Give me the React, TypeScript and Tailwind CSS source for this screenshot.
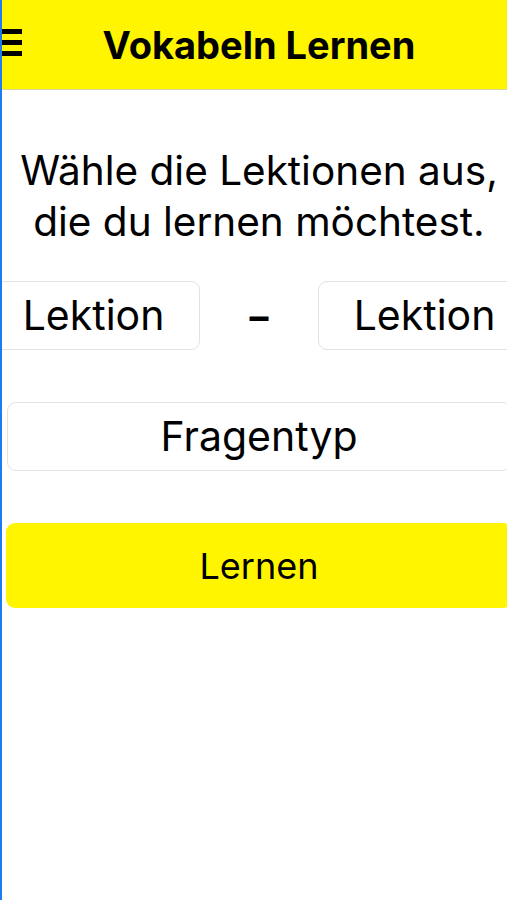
import React from "react";

const font = { fontFamily: 'Inter, "Noto Sans", Arial, sans-serif' };

function MenuIcon() {
  return (
    <div className="flex w-[20px] flex-col gap-[6px]">
      <span className="block h-[5px] w-full bg-black" />
      <span className="block h-[5px] w-full bg-black" />
      <span className="block h-[5px] w-full bg-black" />
    </div>
  );
}

function Picker({ label, className }: { label: string; className: string }) {
  return (
    <button
      type="button"
      className={`flex h-[69px] shrink-0 items-center justify-center rounded-[9px] border border-[#e2e2e2] bg-white text-[41px] leading-none text-black ${className}`}
    >
      {label}
    </button>
  );
}

export default function App() {
  return (
    <div className="h-[900px] w-[507px] overflow-hidden border-l-2 border-[#1e7bf2] bg-white" style={font}>
      <div className="w-[514px]">
        <header className="relative flex h-[90px] items-center justify-center border-b border-[#d9d49a] bg-[#fff500]">
          <div className="absolute left-0 top-[29px]">
            <MenuIcon />
          </div>
          <h1 className="text-[38px] font-bold leading-none text-black">Vokabeln Lernen</h1>
        </header>

        <p className="mt-[55px] text-center text-[40.5px] leading-[51px] text-black">
          Wähle die Lektionen aus,
          <br />
          die du lernen möchtest.
        </p>

        <div className="mt-[34px] flex items-center justify-center">
          <Picker label="Lektion" className="w-[213px]" />
          <span className="w-[118px] shrink-0 text-center text-[38px] font-bold leading-none text-black">–</span>
          <Picker label="Lektion" className="w-[213px]" />
        </div>

        <div className="mt-[52px] px-[5px]">
          <Picker label="Fragentyp" className="w-full" />
        </div>

        <div className="mt-[52px] px-[4px]">
          <button
            type="button"
            className="flex h-[85px] w-full items-center justify-center rounded-[9px] bg-[#fff500] text-[36px] leading-none text-black"
          >
            Lernen
          </button>
        </div>
      </div>
    </div>
  );
}
